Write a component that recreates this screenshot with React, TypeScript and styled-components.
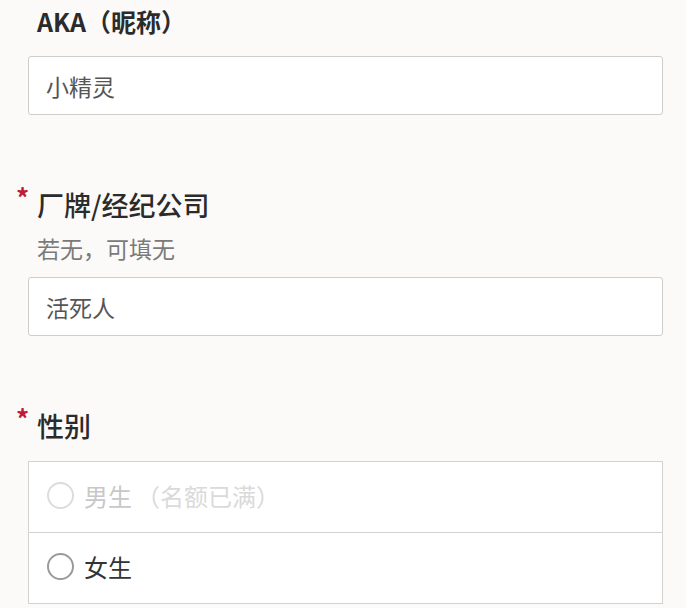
import { createGlobalStyle } from 'styled-components';
import styled from 'styled-components';

const GlobalStyle = createGlobalStyle`
  html, body {
    margin: 0;
    padding: 0;
    background: #fbfaf8;
  }
  body {
    font-family: "Noto Sans CJK SC", "Noto Sans", sans-serif;
  }
`;

const Page = styled.div`
  padding: 3px 23px 0 28px;
`;

const Field = styled.section`
  & + & {
    margin-top: 72px;
  }
`;

const Title = styled.div<{ $size?: number; $weight?: number }>`
  display: flex;
  align-items: flex-start;
  padding-left: 9px;
  font-size: ${(p) => p.$size ?? 27}px;
  line-height: 36px;
  font-weight: ${(p) => p.$weight ?? 500};
  color: #2b2b2b;
`;

const Required = styled.span`
  width: 21px;
  margin-left: -21px;
  margin-top: -2px;
  color: #c01a35;
  font-size: 26px;
  line-height: 24px;
  font-weight: 700;
`;

const Hint = styled.div`
  margin-top: 9px;
  padding-left: 9px;
  font-size: 23px;
  line-height: 32px;
  color: #7a7a7a;
`;

const TextInput = styled.input<{ $gap?: number }>`
  display: block;
  box-sizing: border-box;
  width: 100%;
  height: 59px;
  margin-top: ${(p) => p.$gap ?? 16}px;
  padding: 0 17px;
  border: 1px solid #cdcdcd;
  border-radius: 3px;
  background: #fff;
  font-family: inherit;
  font-size: 23px;
  color: #555;
  outline: none;
`;

const OptionList = styled.div`
  margin-top: 17px;
  border: 1px solid #d2d2d2;
  background: #fff;
`;

const Option = styled.label<{ $disabled?: boolean }>`
  display: flex;
  align-items: center;
  gap: 10px;
  height: 70px;
  padding-left: 18px;
  font-size: 24px;
  color: ${(p) => (p.$disabled ? '#c8c8c8' : '#333')};
  & + & {
    border-top: 1px solid #d2d2d2;
  }
`;

const Circle = styled.span<{ $disabled?: boolean }>`
  box-sizing: border-box;
  width: 27px;
  height: 27px;
  margin-top: -3px;
  border-radius: 50%;
  border: 2px solid ${(p) => (p.$disabled ? '#dcdcdc' : '#9a9a9a')};
  flex-shrink: 0;
`;

const OptionText = styled.span`
  margin-top: -4px;
`;

const Note = styled.span`
  margin-left: 4px;
  color: #dadada;
`;

export default function App() {
  return (
    <Page>
      <GlobalStyle />
      <Field>
        <Title $size={25} $weight={700}>AKA（昵称）</Title>
        <TextInput $gap={17} defaultValue="小精灵" />
      </Field>

      <Field>
        <Title>
          <Required>*</Required>厂牌/经纪公司
        </Title>
        <Hint>若无，可填无</Hint>
        <TextInput $gap={13} defaultValue="活死人" />
      </Field>

      <Field>
        <Title>
          <Required>*</Required>性别
        </Title>
        <OptionList>
          <Option $disabled>
            <Circle $disabled />
            <OptionText>
              男生<Note>（名额已满）</Note>
            </OptionText>
          </Option>
          <Option>
            <Circle />
            <OptionText>女生</OptionText>
          </Option>
        </OptionList>
      </Field>
    </Page>
  );
}
